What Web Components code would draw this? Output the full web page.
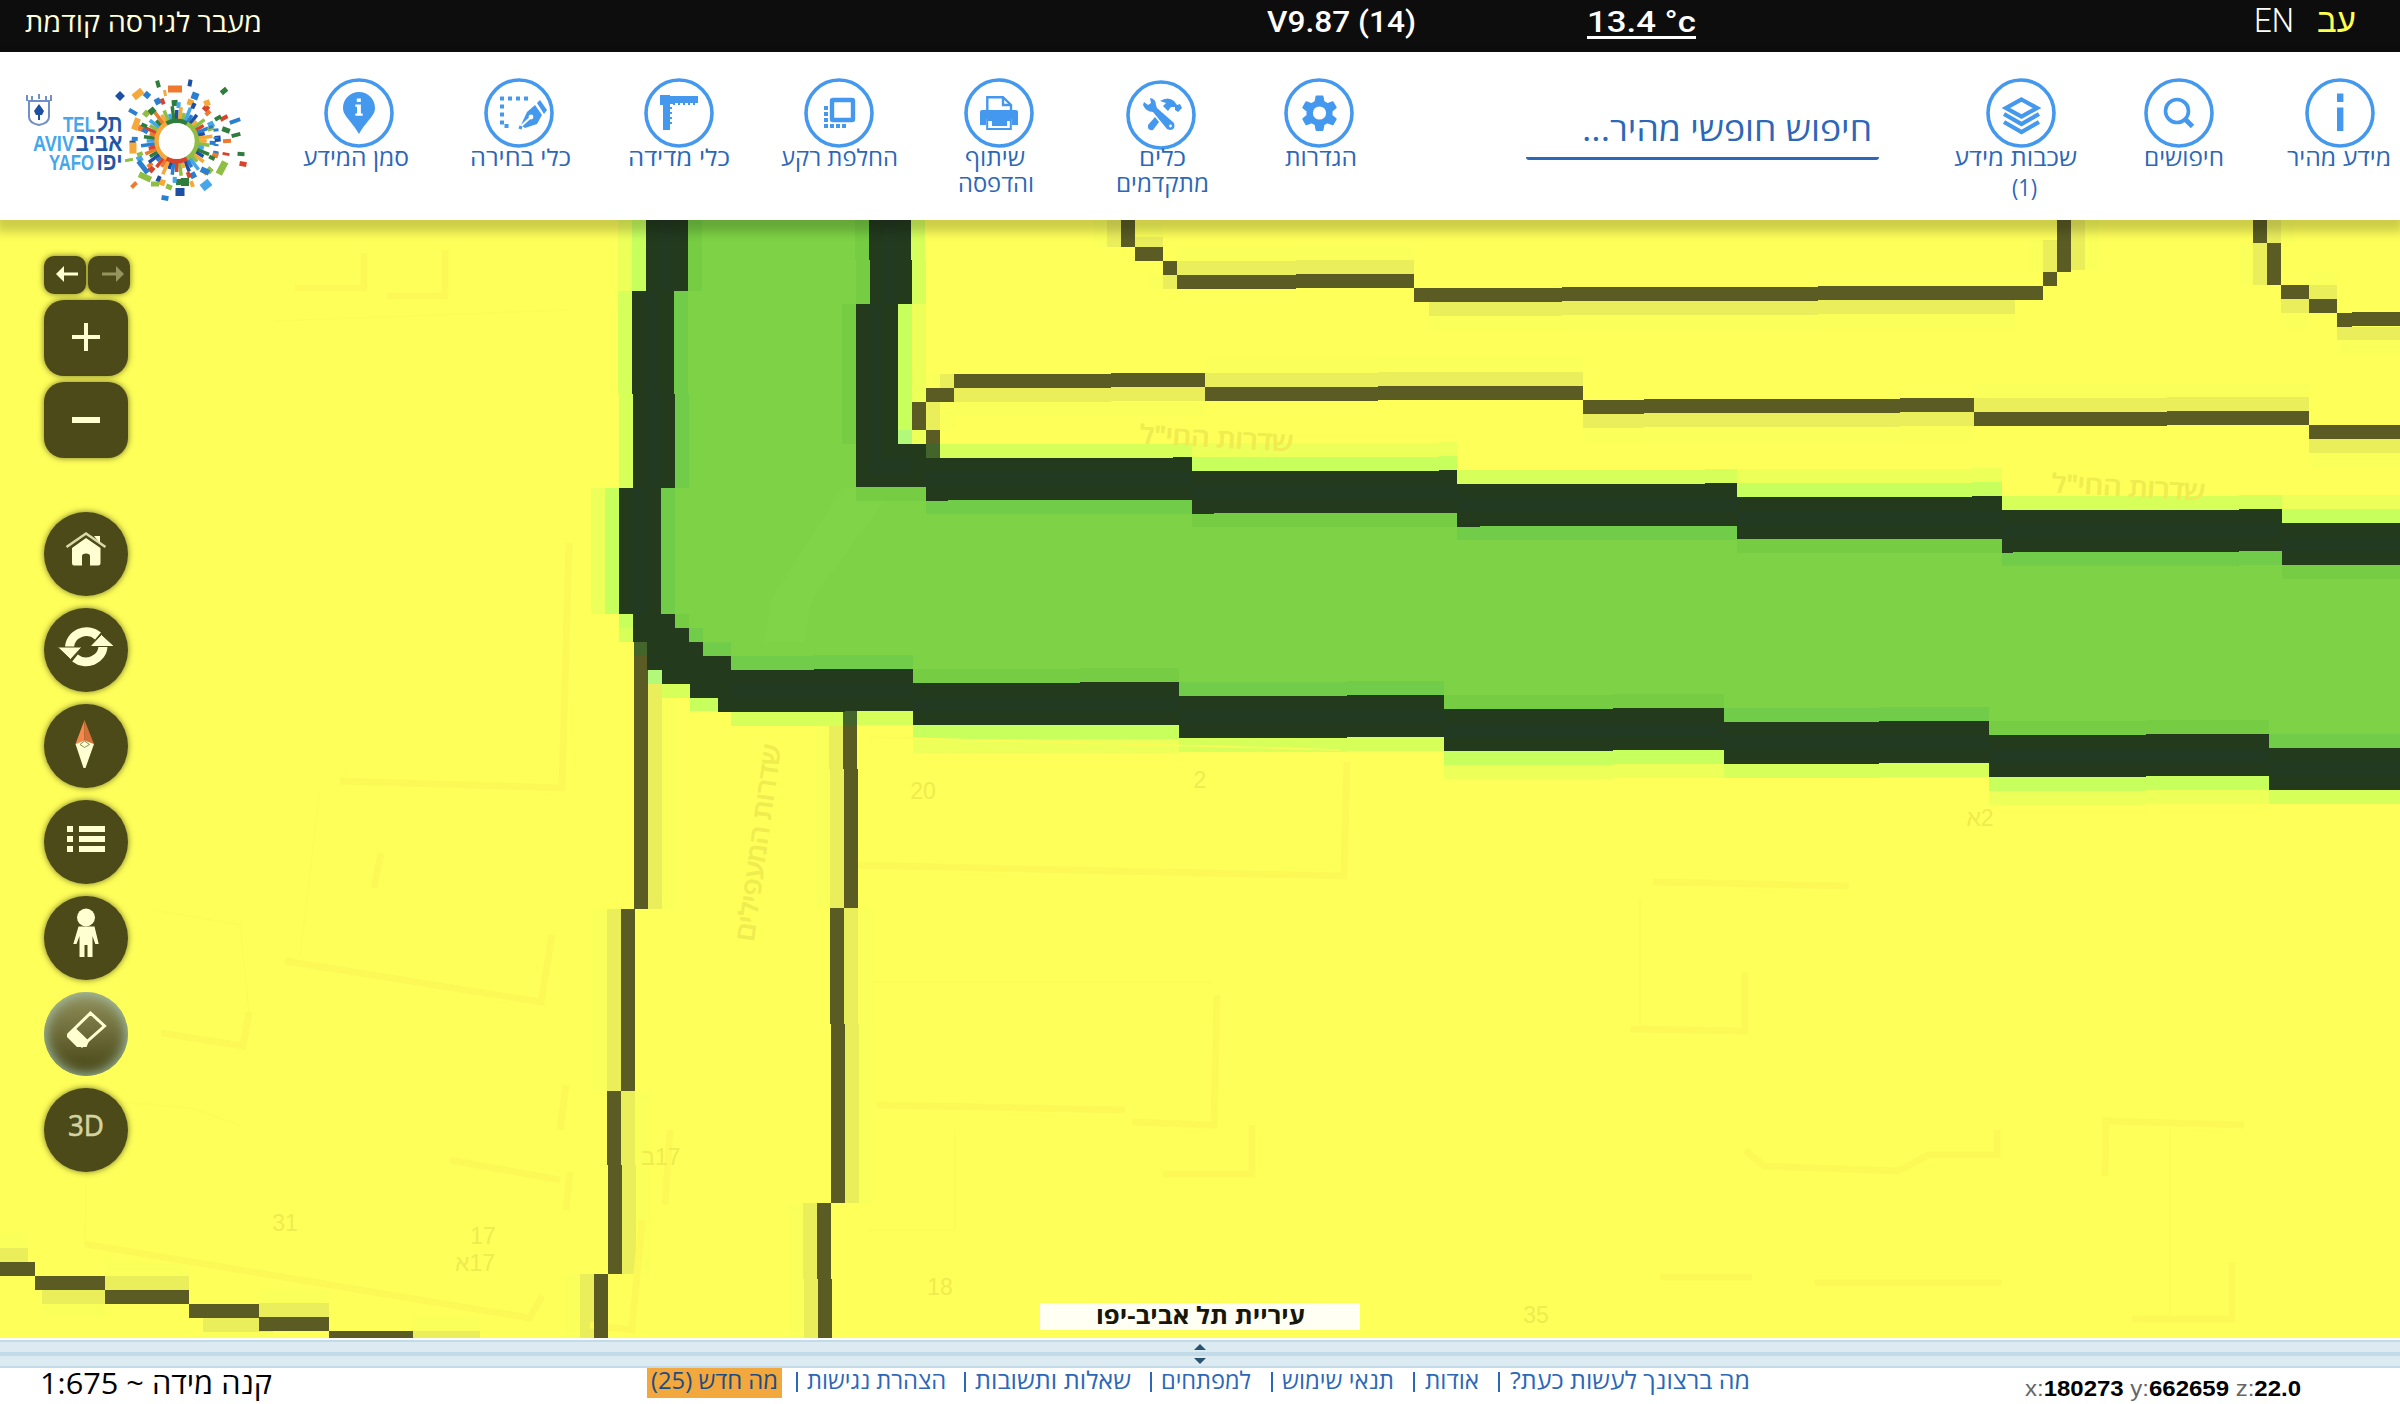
<!DOCTYPE html>
<html lang="he">
<head>
<meta charset="utf-8">
<title>Tel Aviv-Yafo GIS</title>
<style>
html,body{margin:0;height:100%}
body{font-family:"Open Sans","Noto Sans","Liberation Sans",sans-serif;overflow:hidden;background:#fff}
</style>
</head>
<body>
<gis-app></gis-app>
<script>
class Base extends HTMLElement{
  paint(html){ if(!this.shadowRoot) this.attachShadow({mode:'open'}); this.shadowRoot.innerHTML=html; }
}

/* One line of text, squeezed or widened to a given width */
class FitText extends Base{
  connectedCallback(){
    const w=+this.getAttribute('w'), dir=this.getAttribute('dir')||'rtl';
    this.paint(`<style>:host{display:block;width:${w}px;direction:ltr;flex:none;white-space:nowrap}
      span{display:inline-block;transform-origin:0 50%;direction:${dir}}</style><span><slot></slot></span>`);
    const s=this.shadowRoot.querySelector('span'), n=s.getBoundingClientRect().width;
    if(n) s.style.transform=`scaleX(${w/n})`;
  }
}
customElements.define('fit-text',FitText);

const ICONS={
  pin:`<path fill="#49e" fill-rule="evenodd" d="M35 14C26 14 19 21 19 30C19 38 27 42 35 56C43 42 51 38 51 30C51 21 44 14 35 14Z"/><path fill="#fff" d="M32.8 20.5h4v3.6h-4zM31.3 26.5h5.6v9h1.8v2.3h-7.4v-2.3h1.7v-6.7h-1.7z"/>`,
  select:`<path d="M44 20.5H18V48H28" fill="none" stroke="#49e" stroke-width="4" stroke-dasharray="4 4"/><g fill="#49e"><path d="M51 27L58 37L53 46L41 50L37 47L43 34Z"/><path d="M53 25L56 22L63 32L60 36Z"/></g><path d="M35 50L46 40" stroke="#fff" stroke-width="2"/><circle cx="47" cy="39" r="2.4" fill="#fff"/><path d="M35 49l3 1" stroke="#49e" stroke-width="3"/>`,
  ruler:`<path fill="#49e" d="M16 17H26V18H54V25H51V27H49V25H46V27H44V25H41V27H39V25H36V27H34V25H31V27H29V26H26V29H28V31H26V34H28V36H26V39H28V41H26V44H28V46H26V52H19V27H16Z"/>`,
  base:`<rect x="28" y="22" width="21" height="20" rx="1" fill="none" stroke="#49e" stroke-width="4.4"/><g fill="#49e"><path d="M20 28h4v4h-4zM20 34h4v4h-4zM20 40h4v4h-4zM20 46h4v4h-4zM26 46h4v4h-4zM32 46h4v4h-4zM38 46h4v4h-4z"/></g>`,
  print:`<path d="M23.3 32V19.2H39L47 27V32M39 19V27H47" fill="none" stroke="#49e" stroke-width="2.4"/><path fill="#49e" d="M18 32H52Q54 32 54 34V47H48V41H22V47H16V34Q16 32 18 32Z"/><path d="M23.2 42H46.8V51H23.2Z" fill="#fff" stroke="#49e" stroke-width="2"/><rect x="28" y="42.5" width="15" height="5.5" fill="#49e"/>`,
  tools:`<path fill="#49e" d="M17 25L18 22L22 25L25 23L24 18Q30 19 30 25L31 28L48 43Q50 50 44 50L41 49L27 32Q20 32 17 25ZM34 21Q42 16 48 21L51 25L54 24L56 28L52 32L49 30L49 27L45 27L42 31L37 26L40 23ZM29 37L33 42L27 50Q21 51 22 45Z"/><circle cx="44.5" cy="46" r="1.4" fill="#fff"/>`,
  gear:`<path fill="#49e" stroke="#49e" stroke-width="2" stroke-linejoin="round" d="M32.500 18.500h6l1 5.500l4 2.200l5.200-2l3 5.200l-4.200 3.600v4.400l4.200 3.600l-3 5.200l-5.200-2l-4 2.200l-1 5.500h-6l-1-5.500l-4-2.200l-5.200 2l-3-5.200l4.200-3.600v-4.400l-4.200-3.600l3-5.200l5.200 2l4-2.200z"/><circle cx="35.500" cy="35" r="6.600" fill="#fff"/>`,
  layers:`<g fill="none" stroke="#49e" stroke-width="4.200"><path d="M35.500 21.500L51 30L35.500 38.500L20 30Z"/><path d="M18 36L35.500 46L53 36M18 44L35.500 54L53 44"/></g>`,
  search:`<circle cx="33" cy="33" r="11.500" fill="none" stroke="#49e" stroke-width="3.600"/><path d="M41 41L48.500 48.500" stroke="#49e" stroke-width="5"/>`,
  info:`<path fill="#49e" d="M32 15.500h6.400v8.500H32zM32 29.500h6.400V53H32z"/>`
};

/* Round toolbar button: icon in a ring plus one or two caption lines */
class ToolItem extends Base{
  connectedCallback(){
    const rows=this.getAttribute('rows').split(';').map(r=>{
      const [t,w,dx,dy]=r.split('~');
      return `<fit-text w="${w}" style="margin-inline-start:${2*(+dx||0)}px;margin-top:${+dy||0}px">${t}</fit-text>`}).join('');
    const drop=+this.getAttribute('drop')||0;
    this.paint(`<style>:host{display:flex;flex-direction:column;align-items:center;width:160px;flex:none;color:#2c67b8;font-size:23px;line-height:26px}
      svg{display:block;width:70px;height:70px;margin-top:${drop}px;margin-bottom:${-4-drop}px;margin-left:${drop*2}px}
      </style><svg viewBox="0 0 70 70"><circle cx="35" cy="35" r="33" fill="#fff" stroke="#49e" stroke-width="3.600"/>${ICONS[this.getAttribute('icon')]}</svg>${rows}`);
  }
}
customElements.define('tool-item',ToolItem);

class TopBar extends Base{
  connectedCallback(){
    this.paint(`<style>:host{display:flex;align-items:flex-start;height:52px;background:#0d0d0d;color:#fff;font-size:28px;line-height:44px;box-sizing:border-box;padding-left:25px}
      .ver{margin-left:1005px}.temp{margin-left:171px;height:36px;border-bottom:3px solid #fff}.en{margin-left:558px;font:33px/42px Roboto,sans-serif;font-weight:300}.he{margin-left:23px;color:#ffff50;font:34px/40px "Liberation Sans",sans-serif}
      .old{color:#ffffdc;font-size:27px}.ver,.temp{font-family:Roboto,sans-serif;font-size:29.500px;font-weight:500}</style>
      <fit-text class="old" w="237">מעבר לגירסה קודמת</fit-text><fit-text class="ver" dir="ltr" w="149">V9.87 (14)</fit-text>
      <fit-text class="temp" dir="ltr" w="109">13.4 °c</fit-text><fit-text class="en" dir="ltr" w="40">EN</fit-text><fit-text class="he" w="39">עב</fit-text>`);
  }
}
customElements.define('top-bar',TopBar);

/* City logo: crest, bilingual name and the mosaic sun */
class CityLogo extends Base{
  connectedCallback(){
    const C=['#f5a93a','#2f7d3c','#2b7fd0','#8fbe45','#ee7a30','#1d4fa3','#46a6ea','#d8432c'];
    let s='';
    const cx=161.700,cy=71;
    const len=[11,15,9,17,12,14,10,16];
    for(let i=0;i<48;i++){
      const l=len[(i*5)%8];
      s+=`<rect x="19" y="-1.700" width="${l}" height="3.500" fill="${C[(i*3+(i>>2))%8]}" transform="translate(${cx} ${cy}) rotate(${i*7.500})"/>`;
      if(i%3!=1) s+=`<rect x="${33+(i*7)%9}" y="-2" width="${6+(i*5)%5}" height="${4+(i%3)}" fill="${C[(i*5+2)%8]}" transform="translate(${cx} ${cy}) rotate(${i*7.500+3})"/>`;
    }
    const ring=['#8fbe45','#d8432c','#f5a93a','#f5a93a','#2f7d3c','#8fbe45'];
    ring.forEach((c,i)=>{const a=i*Math.PI/3,b=a+Math.PI/3+.02;
      s+=`<path d="M${cx+20*Math.cos(a)} ${cy+20*Math.sin(a)}A20 20 0 0 1 ${cx+20*Math.cos(b)} ${cy+20*Math.sin(b)}" fill="none" stroke="${c}" stroke-width="5"/>`});
    // loose chips: x, y, width, height, angle, colour
    [[105,26,7,7,45,5],[123,24,11,7,-38,0],[143,14,4,7,-15,1],[160,19,14,7,0,4],[175,13,4,7,10,5],[209,21,7,5,-40,1],[132,25,6,6,40,2],[150,23,3,6,-10,0],[180,26,7,7,20,2],[118,42,9,4,30,2],[137,41,7,6,-40,1],[121,54,6,12,20,0],[130,61,6,4,30,2],[118,78,7,11,0,0],[114,90,8,3,-10,3],[128,97,5,15,-38,2],[130,107,13,6,25,3],[119,115,7,4,-45,4],[165,122,9,8,0,5],[150,128,7,5,10,2],[191,115,10,8,-38,6],[177,114,4,6,-20,0],[207,98,7,14,28,3],[228,94,7,5,10,7],[226,84,7,4,5,1],[211,84,7,3,10,7],[221,65,9,4,-15,1],[212,71,8,4,-5,4],[220,51,11,4,-20,2],[209,48,8,4,-28,7],[203,48,7,4,-30,1],[192,33,6,6,-20,0],[211,60,8,5,20,1],[201,60,5,3,-5,2],[201,68,5,2,-5,2],[201,75,5,2,5,2],[201,82,5,2,10,2],[196,57,5,3,-15,2],[140,114,8,5,0,3],[154,117,6,5,20,3],[170,112,8,8,0,1],[190,101,9,6,25,2]]
      .forEach(([x,y,w,h,r,c])=>s+=`<rect x="${-w/2}" y="${-h/2}" width="${w}" height="${h}" fill="${C[c]}" transform="translate(${x} ${y}) rotate(${r})"/>`);
    const t=(x,y,w,f,str,d)=>`<text x="${x}" y="${y}" textLength="${w}" lengthAdjust="spacingAndGlyphs" fill="${f}" ${d?'direction="rtl" class="h"':''}>${str}</text>`;
    this.paint(`<style>:host{display:block;width:240px;height:140px;flex:none}text{font:bold 22px "Liberation Sans",sans-serif}.h{font-size:24px}</style>
    <svg width="240" height="140">${s}<circle cx="${cx}" cy="${cy}" r="18" fill="#fff"/>
    <g fill="none" stroke="#6f8fc6" stroke-width="2"><path d="M14 31H34V47Q34 53 24 55Q14 53 14 47ZM12 31V25M17 30V26M24 29V24M31 30V26M36 31V25"/></g><path d="M24 34l5 7-2 4h-6l-2-4zM23 44h2v6h-2z" fill="#1d4fa3"/>
    ${t(48,62,32,'#46a6ea','TEL')}${t(107.500,62,26,'#1f57a8','תל',1)}
    ${t(18,81,41,'#46a6ea','AVIV')}${t(107.500,81,47,'#1f57a8','אביב',1)}
    ${t(34,100,45,'#46a6ea','YAFO')}${t(107.500,100,26,'#1f57a8','יפו',1)}</svg>`);
  }
}
customElements.define('city-logo',CityLogo);

class ToolHeader extends Base{
  connectedCallback(){
    this.paint(`<style>:host{display:flex;height:168px;background:#fff;box-sizing:border-box;position:relative;z-index:2;box-shadow:0 8px 10px 4px rgba(0,0,0,.2)}
      city-logo{margin:18px 24px 0 15px}.tools{display:flex;flex:none;padding-top:26px}
      .find{flex:none;margin:54px 0 0 127px;width:353px;height:51px;border-bottom:3px solid #2c67b8;border-radius:3px;display:flex;justify-content:flex-end;box-sizing:content-box;color:#2c67b8;font-size:33px;line-height:46px}
      .find fit-text{margin-right:7px}.right{margin-left:62px}.right tool-item:nth-child(2){margin:0 1px 0 -2px}</style>
    <city-logo></city-logo>
    <div class="tools"><tool-item icon="pin" rows="סמן המידע~106~-3"></tool-item><tool-item icon="select" rows="כלי בחירה~101~1"></tool-item>
    <tool-item icon="ruler" rows="כלי מדידה~102~0"></tool-item><tool-item icon="base" rows="החלפת רקע~117~0"></tool-item>
    <tool-item icon="print" rows="שיתוף~60~-4;והדפסה~76~-3"></tool-item><tool-item icon="tools" drop="2" rows="כלים~47~3;מתקדמים~93~3"></tool-item>
    <tool-item icon="gear" rows="הגדרות~72~2"></tool-item></div>
    <div class="find"><fit-text w="290">חיפוש חופשי מהיר...</fit-text></div>
    <div class="tools right"><tool-item icon="layers" rows="שכבות מידע~123~-6;(1)~25~3~4"></tool-item><tool-item icon="search" rows="חיפושים~80~5"></tool-item><tool-item icon="info" rows="מידע מהיר~104~-1"></tool-item></div>`);
  }
}
customElements.define('tool-header',ToolHeader);

/* Parcel map raster: every entry is x0,y0,x1,y1 in page pixels */
class ParcelMap extends Base{
  connectedCallback(){
    const R=(list,f)=>`<g fill="${f}">`+list.map(([a,b,c,d])=>`<rect x="${a}" y="${b}" width="${c-a}" height="${d-b}"/>`).join('')+'</g>';
    const roads=[[1121,220,1135,247],[1135,247,1163,261],[1163,261,1177,275],[1177,275,1296,289],[1296,274,1414,288],[1414,288,1562,302],[1562,287,1818,301],[1818,286,2043,300],[2043,272,2057,286],[2057,220,2071,272],
    [2253,220,2267,243],[2267,243,2281,285],[2281,285,2309,299],[2309,299,2337,313],[2337,313,2352,327],[2352,312,2400,326],
    [912,402,926,430],[926,388,954,402],[926,430,940,446],[954,374,1111,388],[1111,373,1205,387],[1205,387,1378,401],[1378,386,1583,400],[1583,400,1644,414],[1644,399,1900,413],[1900,398,1974,412],[1974,412,2167,426],[2167,411,2309,425],[2309,425,2400,439],
    [634,656,648,909],[621,909,635,1091],[607,1091,621,1165],[608,1165,622,1274],[594,1274,608,1338],
    [843,725,857,769],[844,769,858,908],[830,908,844,1024],[831,1024,845,1203],[817,1203,831,1279],[818,1279,832,1338],
    [0,1262,35,1276],[35,1276,105,1290],[105,1290,189,1304],[189,1304,259,1318],[259,1317,329,1331],[329,1331,413,1338]];
    const halo=[[1107,220,1121,247],[1135,237,1163,247],[1177,261,1296,275],[1296,260,1414,274],[1163,275,1177,289],[1429,302,1562,316],[1562,301,1818,315],[1818,300,2015,314],[2043,240,2057,272],[2071,220,2085,270],[2267,220,2281,243],[2253,243,2267,285],[2281,299,2309,313],[2309,285,2337,299],[2337,327,2400,340],[940,374,954,388],
    [926,402,940,430],[954,388,1111,402],[1111,387,1205,401],[1205,373,1378,387],[1378,372,1583,386],[1583,414,1644,428],[1644,413,1900,427],[1900,412,1974,426],[1974,398,2167,412],[2167,397,2309,411],[2309,439,2400,453],
    [648,683,662,909],[607,909,621,1091],[621,1091,635,1165],[622,1165,636,1274],[580,1274,594,1338],[829,726,843,769],[830,769,844,908],[844,908,858,1024],[845,1024,859,1203],[803,1203,817,1279],[804,1279,818,1338],
    [0,1248,28,1262],[42,1290,105,1304],[105,1276,189,1290],[203,1318,273,1332],[259,1303,329,1317],[413,1331,480,1338]];
    const soft=halo.map(([a,b,c,d])=>(c-a>d-b)?[a,b-14,c,d+14]:[a-14,b,c+14,d]);
    const green='M675 220H870V444H926V486H1192V500H1457V515H1737V528H2002V540H2282V553H2400V760H2269V745H1989V735H1724V720H1444V710H1179V695H913V680H731V656H703V642H689V628H661V500H661V291H675Z';
    const left=[[646,220,688,291],[632,291,674,394],[633,394,675,488],[619,488,661,614],[633,614,675,642],[660,628,689,670],[675,642,703,684],[647,642,680,670],[662,656,731,684],[690,670,732,698],[718,698,732,711]];
    const rt=[[869,220,911,260],[870,260,911.500,304],[856,304,898,444],[856,444,926,487],[926,472,948,501]];
    const upper=[[926,458,1173,500],[1173,457,1192,500],[1192,471,1439,513],[1439,470,1457,513],[1457,484,1705,526],[1705,483,1737,526],[1737,497,1972,539],[1972,496,2002,539],[2002,510,2239,552],[2239,509,2282,551],[2282,523,2400,565]];
    const low=[[718,684,732,712],[731,670,814,712],[814,669,845,712],[845,669,913,711],[913,683,1080,725],[1080,682,1179,724.500],[1179,696,1347,738],[1347,695,1444,737],[1444,709,1613,751],[1613,708,1724,750],[1724,722,1879,764],[1879,721,1989,763],[1989,735,2146,777],[2146,734,2269,776],[2269,748,2400,790]];
    const extra=[[690,684,731,698],[1192,500,1214,514],[1457,513,1480,527],[2002,539,2013,553]];
    const neon=[], mid=[], pale=[], inStrong=[], inMid=[];
    const fringe=(strong,near,far)=>{ if(strong){neon.push(near);pale.push(far)} else mid.push(near) };
    upper.forEach(([a,b,c,d],i)=>{const s=[2,3,6,7,10].includes(i);fringe(s,[a,b-14,c,b],[a,b-28,c,b-14]);(s?inMid:inStrong).push([a,d,c,d+14])});
    low.slice(1).forEach(([a,b,c,d],i)=>{const s=[3,4,7,8,11,12].includes(i);fringe(s,[a,d,c,d+14],[a,d+14,c,d+28]);(s?inMid:inStrong).push([a,b-14,c,b])});
    left.slice(0,4).forEach(([a,b,c,d],i)=>{fringe(i==0||i==3,[a-14,b,a,d],[a-28,b,a-14,d]);(i==0?inMid:inStrong).push([c,b,c+14,d])});
    rt.slice(0,3).forEach(([a,b,c,d],i)=>{fringe(i==2,[c,b,c+14,d],[c+14,b,c+28,d]);inMid.push([a-14,b,a,d])});
    neon.push([619,614,633,628],[690,698,718,711]); mid.push([619,628,633,642],[662,684,690,698]);
    inStrong.push([689,628,703,642],[703,642,731,656]); inMid.push([675,614,689,628],[856,487,926,501]);
    const B=['569 543 562 788 340 781','285 961 541 1002 552 935','161 1033 243 1046 249 1012','374 888 381 853','85 1244 530 1318 542 1296','295 288 364 288 364 253','387 296 445 296 445 250','850 865 1344 876 1347 762','877 1105 1125 1110','1217 995 1214 1125 1132 1122','1653 882 1849 886','1630 1029 1745 1031 1745 972','1163 1174 1252 1174 1252 1125','1745 1150 1764 1166 1898 1171 1929 1155 1997 1155 1997 1130','2105 1176 2106 1121 2244 1125','2132 1319 2232 1319 2232 1263','1660 1277 1752 1277','1814 1283 2002 1283','670 1130 665 1205','560 1130 566 1085','570 1172 566 1210 M590 1325 632 1330 642 1220','450 1160 560 1180'];
    const outlines='M275 321L570 310M320 790L300 955M155 910L240 925L249 1012M120 1102L190 1108L240 1125M88 1110L85 1244M870 737L1340 750M870 982H1210M870 1230H955V1130M2170 1130V1319M1640 900V1029';
    const T=(x,y,str,o='')=>`<text x="${x}" y="${y}" ${o}>${str}</text>`;
    this.paint(`<style>:host{display:block}svg{display:block}text{font-size:23px;font-family:"Liberation Sans",sans-serif;fill:#eeeb4f;text-anchor:middle;direction:rtl}.st text{font:25px "Open Sans","Noto Sans","Liberation Sans",sans-serif;fill:#efec50;stroke:#efec50;stroke-width:1}</style>
    <svg width="2400" height="1118" viewBox="0 220 2400 1118"><rect y="220" width="2400" height="1118" fill="#ffff5a"/>
    <g shape-rendering="crispEdges">${R(soft,'#fbff59')}${R(halo,'#ebee5b')}${R(pale,'#edff59')}${R(mid,'#d6ff59')}${R(neon,'#c7ff5d')}</g>
    <path d="${outlines}" fill="none" stroke="#fcfb58" stroke-width="1.500"/>
    <g fill="none" stroke="#fcf957" stroke-width="7">${B.map(p=>`<path d="M${p}"/>`).join('')}</g>
    <g class="st">${T(0,0,'שדרות החי"ל','transform="translate(1216 447) rotate(3)" textLength="153" lengthAdjust="spacingAndGlyphs"')}${T(0,0,'שדרות החי"ל','transform="translate(2128 496) rotate(3)" textLength="153" lengthAdjust="spacingAndGlyphs"')}${T(0,0,'שדרות המעפילים','transform="translate(767 844) rotate(-82)" textLength="198" lengthAdjust="spacingAndGlyphs"')}</g>
    ${T(923,799,'20')}${T(1200,788,'2')}${T(1980,826,'2א')}${T(285,1231,'31')}${T(483,1244,'17')}${T(475,1271,'17א')}${T(661,1165,'17ב')}${T(940,1295,'18')}${T(1536,1323,'35')}
    <g shape-rendering="crispEdges"><path d="${green}" fill="#7ed245"/></g>
    <path d="M842 488L771 600L764 642H804L812 600L884 501V488Z" fill="#80d447"/>
    <g shape-rendering="crispEdges">
    ${R(inMid,'#76cc43')}${R(inStrong,'#70cc49')}${R(roads,'#5a5c24')}${R([[634,642,648,656],[926,444,940,458],[843,711,857,725]],'#43642a')}
    ${R(left.concat(rt,upper,low,extra),'#233a1d')}
    ${R([[660,220,674,290],[646,291,660,394],[647,394,661,488],[633,488,647,614],[883,220,897,304],[870,304,884,458],[870,458,912,473],[926,472,1192,486],[1192,485,1457,499],[1457,498,1737,512],[1737,511,2002,525],[2002,524,2282,538],[2282,537,2400,551],[731,684,913,698],[913,697,1179,711],[1179,710,1444,724],[1444,723,1724,737],[1724,736,1989,750],[1989,749,2269,763],[2269,762,2400,776]],'#233a22')}
    ${R([[898,430,912,444],[648,670,662,684]],'#b2f879')}</g></svg>`);
  }
}
customElements.define('parcel-map',ParcelMap);

const Y='#ffffd2';
const NAV={
  back:`<path fill="${Y}" d="M12 18L20 10V16.500H34V19.500H20V26Z"/>`,
  fwd:`<path fill="#95945f" d="M36 18L28 10V16.500H14V19.500H28V26Z"/>`,
  plus:`<path fill="${Y}" d="M28 35h12V23h4v12h12v4H44v12h-4V39H28z"/>`,
  minus:`<path fill="${Y}" d="M28 35h28v6H28z"/>`,
  home:`<path d="M22.500 35L42 21.500L61.500 35" fill="none" stroke="#d9d9a8" stroke-width="2.600"/><path fill="${Y}" d="M28 36L42 26L56.500 36V51Q56.500 53.500 54 53.500H46V44Q46 41.500 42 41.500Q38 41.500 38 44V53.500H30Q28 53.500 28 51ZM50 24h6v7z"/>`,
  cycle:`<g fill="none" stroke="${Y}" stroke-width="9"><path d="M25.500 40A17 16 0 0 1 54 28"/><path d="M59 38A17 16 0 0 1 31 50"/></g><path fill="${Y}" stroke="#4c4a19" stroke-width="1" d="M13.500 39H38L26.500 51.500ZM70.500 38.500H46L57.500 26.500Z"/>`,
  compass:`<path fill="#f6884e" d="M40.500 16L31.500 40L40.500 37Z"/><path fill="#d57038" d="M40.500 16L50 40L40.500 37Z"/><path fill="${Y}" d="M31.500 40L40.500 36.500L50 40L41.500 64H39.500Z"/><path d="M36 40.500L40.500 37L45.500 40.500L40.500 43.500Z" fill="none" stroke="#8a8750" stroke-width="1"/>`,
  list:`<path fill="${Y}" d="M23 26h6v6h-6zM35 26h26v6H35zM23 36h6v6h-6zM35 36h26v6H35zM23 46h6v6h-6zM35 46h26v6H35z"/>`,
  person:`<circle cx="42" cy="21.500" r="9" fill="${Y}"/><path fill="${Y}" d="M34.500 30.500H50.500L54.700 48H51.300L48.500 40V61H43.500V49H40.500V61H35.500V40L32.500 48H29.300Z"/>`,
  eraser:`<path d="M25 42L46.500 21L60.500 34L38 54Z" fill="none" stroke="${Y}" stroke-width="3"/><path fill="${Y}" d="M23 42.500L32 36.500L45 49L42.500 55H33L23 45Z"/>`,
  '3d':''
};
class NavButton extends Base{
  connectedCallback(){
    const k=this.getAttribute('kind'), small=k=='back'||k=='fwd', sq=k=='plus'||k=='minus';
    const w=small?42:84,h=small?38:sq?76:84;
    this.paint(`<style>:host{display:flex;justify-content:center;box-sizing:border-box;width:${w}px;height:${h}px;border-radius:${small?'10px':sq?'20px':'50%'};background:#4c4a19;box-shadow:0 0 6px rgba(60,60,20,.7);overflow:hidden}
      :host([kind=eraser]){background:linear-gradient(#94935f,#4c4a19 90%);box-shadow:inset 0 0 13px 1px #a5c8b2}svg{display:block;flex:none}
      .t{font:28.500px/75px "Open Sans",sans-serif;color:#d5d3a0;-webkit-text-stroke:.6px #d5d3a0}</style>${k=='3d'?'<fit-text class="t" dir="ltr" w="36">3D</fit-text>':`<svg width="${w}" height="${h}">${NAV[k]}</svg>`}`);
  }
}
customElements.define('nav-button',NavButton);

class NavPanel extends Base{
  connectedCallback(){
    this.paint(`<style>:host{display:flex;flex-direction:column;gap:6px}.r{display:flex;gap:2px}.c{display:flex;flex-direction:column;gap:12px;margin-top:48px}</style>
    <div class="r"><nav-button kind="back"></nav-button><nav-button kind="fwd"></nav-button></div>
    <nav-button kind="plus"></nav-button><nav-button kind="minus"></nav-button>
    <div class="c">${['home','cycle','compass','list','person','eraser','3d'].map(k=>`<nav-button kind="${k}"></nav-button>`).join('')}</div>`);
  }
}
customElements.define('nav-panel',NavPanel);

class PanelSplitter extends Base{
  connectedCallback(){
    this.paint(`<style>:host{display:flex;flex-direction:column;margin-top:2px;border-top:2px solid #c3dbe9;border-bottom:2px solid #c3dbe9}
    div{height:10px;background:#dceaf2;display:flex;justify-content:center;align-items:center}div+div{border-top:4px solid #c3dbe9}svg{display:block}</style>
    <div><svg width="14" height="6"><path d="M1 6L7 0L13 6Z" fill="#2b536f"/></svg></div><div><svg width="14" height="6"><path d="M1 0L7 6L13 0Z" fill="#2b536f"/></svg></div>`);
  }
}
customElements.define('panel-splitter',PanelSplitter);

class StatusFooter extends Base{
  connectedCallback(){
    const L=[['הצהרת נגישות',139,10,18],['שאלות ותשובות',156,10,19],['למפתחים',90,10,20],['תנאי שימוש',112,10,19],['אודות',54,11,19],['מה ברצונך לעשות כעת?',240,11,0]];
    this.paint(`<style>:host{display:flex;height:36px;background:#fff;box-sizing:border-box;padding-left:40px;color:#2c67b8;font-size:24px;line-height:24px}
    .scale{color:#000;font-size:29px;line-height:30px}.new{margin-left:375px;width:135px;height:30px;background:#f2a83c;color:#1d4c85;display:flex;justify-content:center}
    .links{display:flex;margin-left:14px}.links i{width:2px;height:20px;background:#2c67b8;margin-top:4px}
    .xy{margin-left:275px;font:22px/42px "Liberation Sans",sans-serif;color:#666}b{color:#000}</style>
    <fit-text class="scale" w="232">קנה מידה ~ 1:675</fit-text><div class="new"><fit-text w="127">מה חדש (25)</fit-text></div>
    <div class="links">${L.map(([t,w,a,b])=>`<i></i><fit-text w="${w}" style="margin:0 ${b}px 0 ${a-1}px">${t}</fit-text>`).join('')}</div>
    <fit-text class="xy" dir="ltr" w="276">x:<b>180273</b> y:<b>662659</b> z:<b>22.0</b></fit-text>`);
  }
}
customElements.define('status-footer',StatusFooter);

class GisApp extends Base{
  connectedCallback(){
    this.paint(`<style>:host{display:flex;flex-direction:column;width:2400px;height:1404px;overflow:hidden}
    main{position:relative;height:1118px}nav-panel{position:absolute;left:44px;top:36px}
    .badge{position:absolute;left:1040px;top:1083px;width:320px;height:27px;background:rgba(255,255,255,.93);display:flex;justify-content:center;font-size:24px;font-weight:700;line-height:23px;color:#16160a}</style>
    <top-bar></top-bar><tool-header></tool-header><main><parcel-map></parcel-map><nav-panel></nav-panel><div class="badge"><fit-text w="209">עיריית תל אביב-יפו</fit-text></div></main>
    <panel-splitter></panel-splitter><status-footer></status-footer>`);
  }
}
customElements.define('gis-app',GisApp);
</script>
</body>
</html>
